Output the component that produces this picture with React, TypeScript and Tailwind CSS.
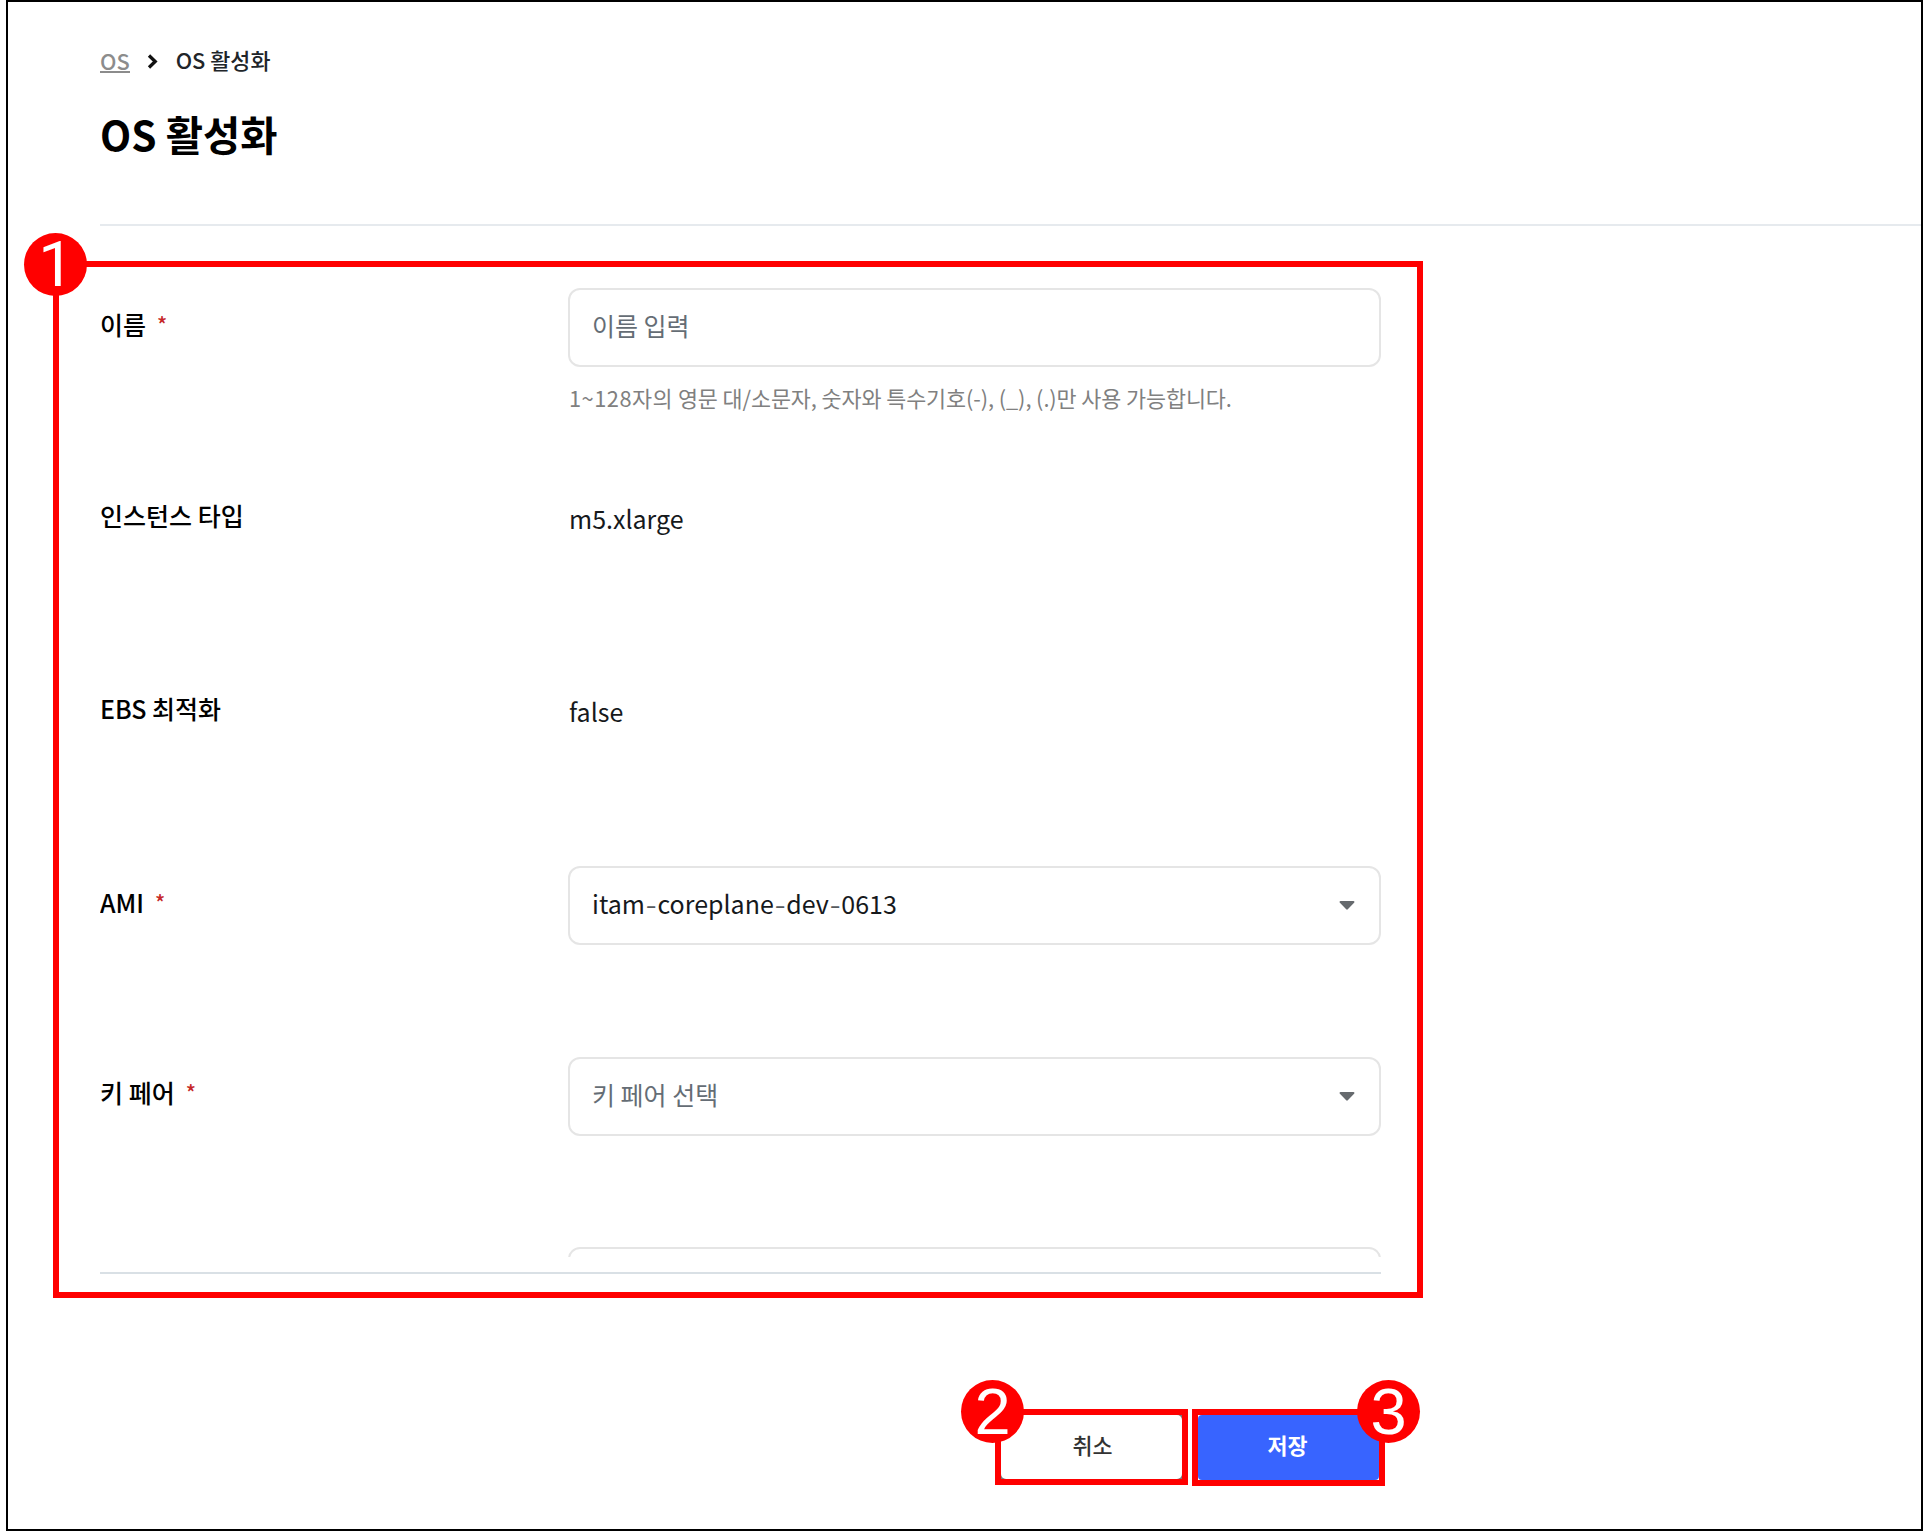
import type { ReactNode } from "react";

function Badge({ children, className }: { children: ReactNode; className: string }) {
  return (
    <span
      className={`absolute z-10 flex h-[63px] w-[63px] items-center justify-center rounded-full bg-[#ff0000] leading-none text-white ${className}`}
    >
      {children}
    </span>
  );
}

function Row({
  label,
  required,
  height,
  children,
}: {
  label: string;
  required?: boolean;
  height: string;
  children?: ReactNode;
}) {
  return (
    <div className={`flex shrink-0 items-start ${height}`}>
      <div className="flex h-[73px] w-[468px] shrink-0 items-center text-[25px] font-medium text-black">
        <span>{label}</span>
        {required && <span className="ml-[11px] text-[21px] font-medium text-[#c62828]">*</span>}
      </div>
      <div className="min-w-0 grow">{children}</div>
    </div>
  );
}

function Field({ text, muted, select }: { text: string; muted?: boolean; select?: boolean }) {
  return (
    <div className="flex h-[79px] items-center justify-between rounded-[12px] border-2 border-[#e5e5e5] bg-white pr-[24px] pl-[22px]">
      {muted ? (
        <span className="-mt-[3px] text-[25px] text-[#656d75]">{text}</span>
      ) : (
        <span className="-mt-[3px] text-[25px] text-[#16191c]">
          {text.split("-").map((part, i) => (
            <span key={i}>
              {i > 0 && (
                <span className="inline-block w-[12.500px] origin-center scale-x-125 text-center text-[#555a5e]">-</span>
              )}
              {part}
            </span>
          ))}
        </span>
      )}
      {select && (
        <svg width="16" height="9" viewBox="0 0 16 9">
          <path d="M1.6 0h12.8c1 0 1.4 1 .7 1.7L8.8 8.3c-.5.5-1.1.5-1.6 0L.9 1.700C.2 1 .6 0 1.600 0z" fill="#666a6e" />
        </svg>
      )}
    </div>
  );
}

export default function App() {
  return (
    <div className="h-[1531px] w-[1923px] bg-white pl-[6px] font-['Noto_Sans_CJK_KR',sans-serif]">
      <div className="flex h-full flex-col border-2 border-black">
        <header className="ml-[92px] h-[224px] shrink-0 border-b-2 border-[#e6eaee]">
          <nav className="flex h-[24px] translate-y-[47px] items-center text-[21.800px] leading-none">
            <a className="border-b-2 border-[#8c8c8c] leading-[21px] font-medium text-[#8c8c8c]">OS</a>
            <svg className="mr-[18px] ml-[17px]" width="11" height="15" viewBox="0 0 11 15">
              <path d="M2 1.500L8.200 7.500L2 13.500" fill="none" stroke="#111" strokeWidth="3.300" />
            </svg>
            <span className="-mt-[3px] font-medium text-[#212529]">OS 활성화</span>
          </nav>
          <h1 className="mt-[83px] text-[40.500px] leading-[50px] font-bold text-black">OS 활성화</h1>
        </header>

        <section className="relative mt-[35px] ml-[45px] h-[1037px] w-[1370px] shrink-0 border-[6px] border-[#ff0000] pr-[36px] pl-[41px]">
          <Badge className="-top-[34px] -left-[35px]">
            <span className="ml-px font-['Roboto',sans-serif] text-[63px]">1</span>
          </Badge>
          <div className="flex h-[990px] flex-col overflow-hidden pt-[21px]">
            <Row label="이름" required height="h-[191px]">
              <Field text="이름 입력" muted />
              <p className="mt-[15px] ml-px text-[21.800px] leading-[32px] tracking-[-0.1px] text-[#808080]">
                <span className="tracking-[0.5px]">1~128자의</span> 영문 대/소문자, 숫자와 특수기호(-), (_), (.)만 사용 가능합니다.
              </p>
            </Row>
            <Row label="인스턴스 타입" height="h-[193.500px]">
              <p className="ml-px flex h-[79px] items-center text-[25px] text-[#16191c]">m5.xlarge</p>
            </Row>
            <Row label="EBS 최적화" height="h-[193.500px]">
              <p className="ml-px flex h-[79px] items-center text-[25px] text-[#16191c]">false</p>
            </Row>
            <Row label="AMI" required height="h-[190.500px]">
              <Field text="itam-coreplane-dev-0613" select />
            </Row>
            <Row label="키 페어" required height="h-[190.500px]">
              <Field text="키 페어 선택" muted select />
            </Row>
            <Row label="" height="h-[190px]">
              <Field text="" />
            </Row>
          </div>
          <div className="mt-[15px] h-[2px] bg-[#d9e0e5]" />
        </section>

        <div className="mt-[111px] ml-[987px] flex items-start gap-[4px]">
          <div className="relative h-[76px] w-[193px] border-[6px] border-[#ff0000] bg-[#777]">
            <Badge className="-top-[35px] -left-[40px] font-['Liberation_Sans',sans-serif] text-[65px]">2</Badge>
            <button className="h-full w-full rounded-[5px] bg-white pb-[3px] pl-[2px] text-[21.800px] font-medium text-[#333]">
              취소
            </button>
          </div>
          <div className="relative h-[77px] w-[193px] border-[6px] border-[#ff0000] bg-white">
            <Badge className="-top-[35px] left-[159px] font-['Liberation_Sans',sans-serif] text-[65px]">3</Badge>
            <button className="h-full w-full rounded-[4px] bg-[#3864ff] pr-[2px] pb-[4px] text-[21.800px] font-bold text-white">
              저장
            </button>
          </div>
        </div>
      </div>
    </div>
  );
}
